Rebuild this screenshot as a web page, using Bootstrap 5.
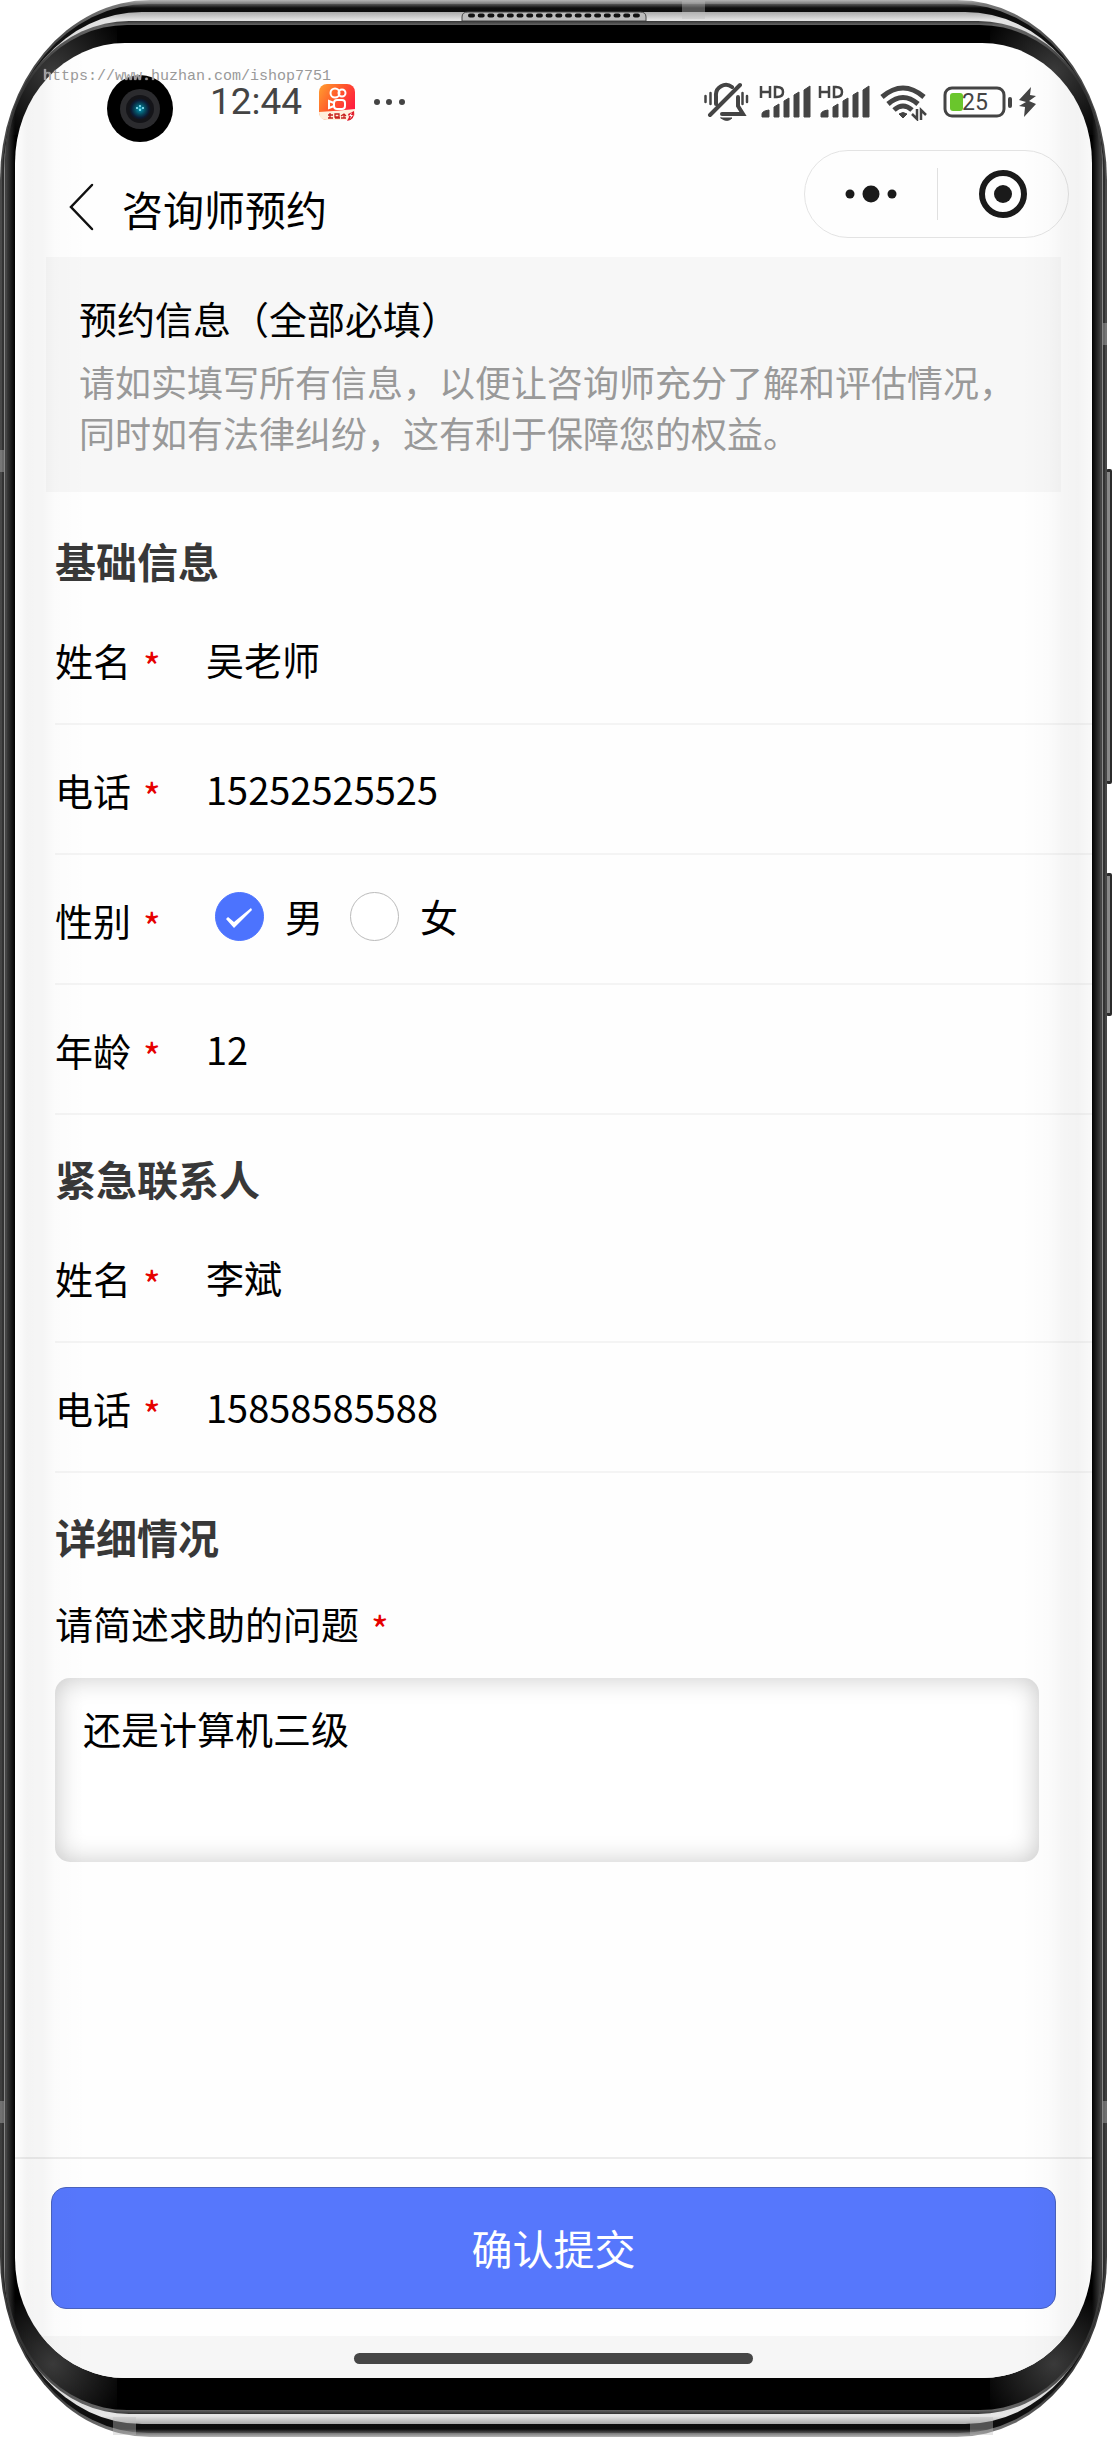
<!DOCTYPE html>
<html lang="zh-CN">
<head>
<meta charset="utf-8">
<meta name="viewport" content="width=device-width, initial-scale=1">
<title>咨询师预约</title>
<link href="https://cdn.jsdelivr.net/npm/bootstrap@5.3.0/dist/css/bootstrap.min.css" rel="stylesheet">
<style>
  body { font-family: "Noto Sans CJK SC", sans-serif; font-size: 38px; line-height: 56px; color: #000; background: #fff; }

  /* phone body: nested metal bands around the screen */
  .phone { margin-right: 5px; }
  .rim-outer { padding: 4px 2px; border-radius: 150px / 180px; background: linear-gradient(#b4b4b4, #777 4px, #4a4a4a 40px, #3c3c3c calc(100% - 40px), #777 calc(100% - 4px), #b4b4b4); }
  .rim-dark { padding: 8px 2px 9px; border-radius: 146px / 174px; background: linear-gradient(#555, #0c0c0c 4px, #161616 60px, #333 200px, #333 calc(100% - 200px), #161616 calc(100% - 60px), #0c0c0c calc(100% - 4px), #555); }
  .rim-light { padding: 9px 1px 10px; border-radius: 138px / 158px; background: linear-gradient(#aaa, #e4e4e4 8px, #ccc 60px, #888 150px, #888 calc(100% - 150px), #ccc calc(100% - 60px), #e6e6e6 calc(100% - 8px), #aaa); }
  .rim-inner { padding: 4px 2px; border-radius: 124px / 138px; background: linear-gradient(#333, #666 4px, #333 60px, #444 200px, #444 calc(100% - 200px), #333 calc(100% - 60px), #666 calc(100% - 4px), #333); }
  .bezel { padding: 18px 8px 32px; border-radius: 120px / 134px;
    background:
      radial-gradient(circle at 46px 46px, #3a3a3a, transparent 80px) top left / 110px 110px no-repeat,
      radial-gradient(circle at 64px 46px, #3a3a3a, transparent 80px) top right / 110px 110px no-repeat,
      radial-gradient(circle at 46px 64px, #3a3a3a, transparent 80px) bottom left / 110px 110px no-repeat,
      radial-gradient(circle at 64px 64px, #3a3a3a, transparent 80px) bottom right / 110px 110px no-repeat,
      linear-gradient(to right, #3a3a3a, #000 8px, #000 calc(100% - 8px), #3a3a3a); }
  .screen { border-radius: 110px / 120px; background: #fefefe; }
  .screen::after { content: ""; position: absolute; inset: 0; pointer-events: none;
    background:
      linear-gradient(to right, rgba(0,0,0,0), rgba(0,0,0,.038) 12px, rgba(0,0,0,.034) 28px, rgba(0,0,0,.012) 40px, transparent 72px) left / 72px 100% no-repeat,
      linear-gradient(to left, rgba(0,0,0,.02), rgba(0,0,0,.042) 14px, rgba(0,0,0,.036) 28px, rgba(0,0,0,.012) 44px, transparent 72px) right / 72px 100% no-repeat; }

  .grille { top: 11px; left: 461px; }
  .band { position: absolute; background: rgba(190,190,190,.4); }
  .band-h { width: 23px; height: 18px; }
  .band-v { width: 4px; height: 22px; }
  .side-key { position: absolute; right: 0; width: 6px; border: solid #2b2b2b; border-width: 3px 2px 3px 1px; border-radius: 2px; background: #888; }

  .camera { left: 92px; top: 32px; }
  .watermark { left: 43px; top: 67px; font: 15px/20px "Liberation Mono", monospace; color: #999; text-shadow: 0 0 1px #fff; }

  .status { padding: 38px 55px 0 195px; height: 80px; color: #444; }
  .clock { font-family: Roboto, sans-serif; font-size: 37px; line-height: 42px; }
  .title-bar { padding: 27px 23px 19px 53px; }
  .page-title { font-size: 41px; line-height: 60px; font-weight: 400; }
  .capsule { width: 265px; height: 88px; border: 1px solid #e3e3e3; border-radius: 44px; }
  .capsule button { border: 0; background: none; padding: 0; }
  .capsule svg { display: block; margin: 0 auto; }
  .capsule-rule { width: 1px; height: 52px; background: #e0e0e0; }

  .notice { margin: 0 31px 5px; padding: 31px 33px 34px; background: #f7f7f7; }
  .notice h2 { font-size: 38px; line-height: 60px; font-weight: 400; }
  .notice p { font-size: 36px; line-height: 51px; color: #999; padding-top: 8px; }
  .sheet { padding-left: 40px; }
  .group-title { font-size: 41px; line-height: 54px; font-weight: 700; color: #383838; padding: 36px 0 8px; }
  .field { height: 130px; border-bottom: 2px solid #f4f4f4; }
  .field-name { width: 151px; padding-top: 2px; }
  .req { color: #e60000; font-size: 38px; line-height: 40px; margin-left: 12px; padding-top: 14px; height: 40px; }
  .field input[type=text], .field input[type=tel] { border: 0; outline: 0; padding: 0; background: transparent; color: #000; font-size: 38px; line-height: 56px; height: 56px; }
  .sex-options { padding: 0 0 6px 9px; }
  .sex-options label { margin: 0 27px 0 21px; }
  .field .sex { width: 49px; height: 49px; margin: 0; border: 1px solid #bbb; background-color: #fff; box-shadow: none; }
  .field .sex:checked { background-color: #4c73fe; border-color: #4c73fe;
    background-size: 49px; background-image: url("data:image/svg+xml,%3csvg xmlns='http://www.w3.org/2000/svg' viewBox='0 0 49 49'%3e%3cpath d='M11 27l8 9 18-18-1-2-17 14-6-5z' fill='%23fff'/%3e%3c/svg%3e"); }
  .story { margin: 27px 53px 0 0; }
  .story textarea { height: 184px; padding: 22px 28px; font-size: 38px; line-height: 56px; color: #000; border: 0; border-radius: 15px; resize: none; background: #fff; box-shadow: inset 0 0 26px rgba(0,0,0,.22); }
  .actions { border-top: 2px solid #ececec; padding: 28px 36px 27px; }
  .btn-send { height: 122px; font-size: 41px; color: #fff; background: #5677fc; border: 1px solid #4a62bd; border-radius: 15px; }
  .home-zone { height: 42px; padding-top: 3px; background: #f6f6f6; }
  .home-bar { width: 399px; height: 11px; border-radius: 6px; background: #464646; }
</style>
<script src="https://cdn.jsdelivr.net/npm/bootstrap@5.3.0/dist/js/bootstrap.bundle.min.js"></script>
</head>
<body>
<div class="position-relative min-vh-100 d-flex flex-column">
  <div class="side-key" style="top:469px;height:315px"></div>
  <div class="side-key" style="top:873px;height:143px"></div>
  <div class="phone rim-outer flex-grow-1 d-flex flex-column position-relative">
   <div class="rim-dark flex-grow-1 d-flex flex-column">
    <div class="rim-light flex-grow-1 d-flex flex-column">
     <div class="rim-inner flex-grow-1 d-flex flex-column">
      <div class="bezel flex-grow-1 d-flex flex-column">
       <div class="screen flex-grow-1 d-flex flex-column position-relative overflow-hidden">

        <svg class="camera position-absolute" width="66" height="67" viewBox="0 0 66 67" aria-hidden="true">
          <defs><radialGradient id="lens"><stop offset="0" stop-color="#3bc"/><stop offset=".2" stop-color="#067a94"/><stop offset=".5" stop-color="#06485c"/><stop offset=".8" stop-color="#0c1a34"/><stop offset="1" stop-color="#141416"/></radialGradient></defs>
          <ellipse cx="33" cy="33.500" rx="33" ry="33.500"/>
          <circle cx="33" cy="34" r="20" fill="#2b2b2e"/><circle cx="33" cy="34" r="14" fill="#141418"/>
          <circle cx="33" cy="34" r="11" fill="url(#lens)"/>
          <g fill="#9ef"><circle cx="33" cy="31" r="1"/><circle cx="33" cy="35" r="1"/><circle cx="30" cy="33" r="1"/><circle cx="36" cy="33" r="1"/></g>
        </svg>

        <div class="status d-flex align-items-center">
          <span class="clock">12:44</span>
          <svg class="ms-3" width="38" height="38" viewBox="0 0 38 38" aria-hidden="true">
            <defs><linearGradient id="ks" x1="0" y1="0" x2="1" y2=".6"><stop offset="0" stop-color="#ffa030"/><stop offset=".5" stop-color="#ff5a2a"/><stop offset="1" stop-color="#ff1c40"/></linearGradient></defs>
            <rect x="1" y="1" width="36" height="36" rx="8" fill="url(#ks)"/>
            <path d="M1 29q18-1 36-3v3q0 8-8 8H9q-8 0-8-8z" fill="#fff0dc"/>
            <g fill="none" stroke="#fff" stroke-width="2"><circle cx="17" cy="10" r="4.500"/><circle cx="24" cy="10" r="3.500"/><rect x="16" y="17" width="11" height="9" rx="3"/><path d="M16 20l-5-2v7l5-2"/></g>
            <g stroke="#c8201c" stroke-width="1.300" fill="none"><path d="M10 32h5M12 30v5M10 35h5M17 31h4v3h-4zM17 35h5M23 33l3-2 2 2M23 35h5M26 31v4"/></g>
            <path d="M36 28l-6 3 1 3-2 4q8-1 7-10z" fill="#e01c2c"/><path d="M34 29l-3 4h2l-1 3 3-4h-2z" fill="#fff"/>
          </svg>
          <svg class="ms-3" width="34" height="8" viewBox="0 0 34 8" fill="#444" aria-hidden="true"><circle cx="5" cy="4" r="3"/><circle cx="17" cy="4" r="3"/><circle cx="30" cy="4" r="3"/></svg>

          <div class="ms-auto d-flex align-items-center">
            <svg width="45" height="40" viewBox="0 0 45 40" fill="none" stroke="#444" stroke-width="3" stroke-linecap="round" aria-label="振动静音">
              <path d="M12 22V14a10 10 0 0 1 16-9M34 15v9l5 8H18M36 3L6 33" stroke-width="4"/>
              <path d="M1.500 14v6M6.500 11v11M38.500 11v11M43 14v6" stroke-width="2.500"/><path d="M17 36h11q-5 5-11 0z" fill="#444" stroke-width="1"/>
            </svg>
            <svg class="ms-2" width="54" height="34" viewBox="0 0 54 34" fill="#444" aria-label="信号 HD">
              <g fill="none" stroke="#444" stroke-width="2.500"><path d="M4 1v12M13 1v12M4 7h9M18 2v10h2q6 0 6-5t-6-5z"/></g>
              <path d="M5 32v-3q0-3 7-4v7zM17 32V22l5-3v13zM27 32V16l5-3v19zM37 32V10l5-3v25zM47 32V5l6-4v31z" stroke="#444" stroke-linejoin="round"/>
            </svg>
            <svg class="ms-1" width="56" height="34" viewBox="0 0 56 34" fill="#444" aria-label="信号 HD">
              <g fill="none" stroke="#444" stroke-width="2.500"><path d="M5 1v12M14 1v12M5 7h9M19 2v10h2q6 0 6-5t-6-5z"/></g>
              <path d="M6 32v-3q0-3 7-4v7zM18 32V22l5-3v13zM28 32V16l5-3v19zM38 32V10l5-3v25zM48 32V5l6-4v31z" stroke="#444" stroke-linejoin="round"/>
            </svg>
            <svg class="ms-2" width="48" height="38" viewBox="0 0 48 38" fill="none" stroke="#444" stroke-width="5" aria-label="无线网络">
              <path d="M3 14q21-18 42 0M9 21q15-13 30 0M15 27q9-8 18 0"/><path d="M20 31q4-3 8 0l-4 4z" fill="#444" stroke-width="1"/>
              <path d="M38 26v10l-5-5M42 37V27l5 5" stroke-width="2.500"/>
            </svg>
            <svg class="ms-3" width="70" height="32" viewBox="0 0 70 32" aria-label="电量">
              <rect x="2" y="2" width="59" height="28" rx="7" fill="none" stroke="#444" stroke-width="3"/><rect x="7" y="7" width="13" height="18" rx="3" fill="#6ac62c"/>
              <rect x="65" y="11" width="4" height="11" rx="2" fill="#444"/>
              <text x="19" y="24" font-family="Roboto, sans-serif" font-size="23" fill="#444">25</text>
            </svg>
            <svg class="ms-1" width="20" height="34" viewBox="0 0 20 34" fill="#444" aria-label="充电中"><path d="M14 2L2 15l7 2-7 4 6 1-1 10L19 19l-7-3 7-5-6-1z"/></svg>
          </div>
        </div>

        <header class="title-bar d-flex align-items-end">
          <a href="#" aria-label="返回"><svg class="d-block" width="26" height="56" viewBox="0 0 26 56" fill="none" stroke="#111" stroke-width="2.500"><path d="M24 3L3 25l21 22" stroke-linecap="round"/></svg></a>
          <h1 class="page-title mb-0 ms-4 ps-1">咨询师预约</h1>
          <div class="capsule ms-auto d-flex align-items-center">
            <button type="button" class="flex-fill" aria-label="更多"><svg width="52" height="20" viewBox="0 0 52 20" fill="#1a1a1a"><circle cx="5" cy="10" r="4.500"/><circle cx="26" cy="10" r="8.500"/><circle cx="47" cy="10" r="4.500"/></svg></button>
            <span class="capsule-rule"></span>
            <button type="button" class="flex-fill" aria-label="关闭"><svg width="50" height="50" viewBox="0 0 50 50"><circle cx="25" cy="25" r="21" fill="none" stroke="#1a1a1a" stroke-width="6"/><circle cx="25" cy="25" r="9" fill="#1a1a1a"/></svg></button>
          </div>
        </header>

        <section class="notice">
          <h2 class="mb-0">预约信息（全部必填）</h2>
          <p class="mb-0">请如实填写所有信息，以便让咨询师充分了解和评估情况，同时如有法律纠纷，这有利于保障您的权益。</p>
        </section>

        <form class="flex-grow-1 d-flex flex-column" id="booking">
          <div class="sheet flex-grow-1">
            <h2 class="group-title mb-0">基础信息</h2>
            <div class="field d-flex align-items-center"><label class="field-name d-flex" for="name">姓名<span class="req">*</span></label><input class="flex-fill" id="name" type="text" value="吴老师"></div>
            <div class="field d-flex align-items-center"><label class="field-name d-flex" for="phone">电话<span class="req">*</span></label><input class="flex-fill" id="phone" type="tel" value="15252525525"></div>
            <div class="field d-flex align-items-center" role="radiogroup" aria-labelledby="sex-label">
              <span class="field-name d-flex" id="sex-label">性别<span class="req">*</span></span>
              <div class="sex-options d-flex align-items-center">
                <input class="form-check-input sex" type="radio" name="sex" id="male" checked><label for="male">男</label>
                <input class="form-check-input sex" type="radio" name="sex" id="female"><label for="female">女</label>
              </div>
            </div>
            <div class="field d-flex align-items-center"><label class="field-name d-flex" for="age">年龄<span class="req">*</span></label><input class="flex-fill" id="age" type="text" value="12"></div>

            <h2 class="group-title mb-0">紧急联系人</h2>
            <div class="field d-flex align-items-center"><label class="field-name d-flex" for="name2">姓名<span class="req">*</span></label><input class="flex-fill" id="name2" type="text" value="李斌"></div>
            <div class="field d-flex align-items-center"><label class="field-name d-flex" for="phone2">电话<span class="req">*</span></label><input class="flex-fill" id="phone2" type="tel" value="15858585588"></div>

            <h2 class="group-title mb-0">详细情况</h2>
            <div class="pt-4"><label class="d-flex" for="story">请简述求助的问题<span class="req">*</span></label></div>
            <div class="story"><textarea class="form-control" id="story">还是计算机三级</textarea></div>
          </div>
          <div class="actions"><button class="btn btn-send w-100" type="submit">确认提交</button></div>
        </form>
        <div class="home-zone d-flex justify-content-center align-items-center"><div class="home-bar"></div></div>
       </div>
      </div>
     </div>
    </div>
   </div>
   <svg class="grille position-absolute" width="186" height="10" viewBox="0 0 186 10" aria-hidden="true"><path d="M1 10V6q0-5 6-5h172q6 0 6 5v4z" fill="#bbb" stroke="#444"/><path d="M9 4.500h170" stroke="#111" stroke-width="4" stroke-linecap="round" stroke-dasharray="3 6.700"/></svg>
   <i class="band band-h" style="left:682px;top:1px"></i>
   <i class="band band-h" style="left:113px;bottom:2px"></i>
   <i class="band band-h" style="left:970px;bottom:2px"></i>
   <i class="band band-v" style="left:0;top:450px"></i>
   <i class="band band-v" style="right:0;top:323px"></i>
   <i class="band band-v" style="left:0;bottom:314px"></i>
   <i class="band band-v" style="right:0;bottom:314px"></i>
  </div>
  <div class="watermark position-absolute">https://www.huzhan.com/ishop7751</div>
</div>
</body>
</html>
